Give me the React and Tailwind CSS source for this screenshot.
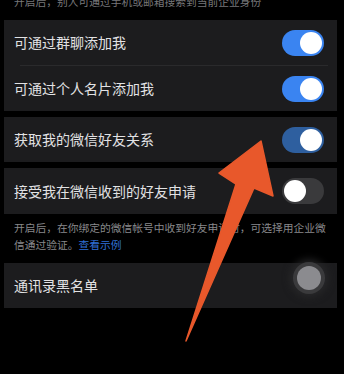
import React from "react";

const Toggle = ({ on, dim }) => {
    if (on) {
        return (
            <div
                className={`w-[42px] h-[26px] rounded-full flex items-center justify-end pr-[2px] ${
                    dim ? "bg-[#2e5f9f]" : "bg-[#3a84f1]"
                }`}
            >
                <div className="w-[22px] h-[22px] rounded-full bg-white" />
            </div>
        );
    }
    return (
        <div className="w-[42px] h-[26px] rounded-full flex items-center pl-[2px] bg-[#3a3a3c]">
            <div className="w-[22px] h-[22px] rounded-full bg-white" />
        </div>
    );
};

const Row = ({ label, children, className = "" }) => (
    <div className={`flex items-center justify-between pl-[10px] pr-[13px] h-[45px] ${className}`}>
        <span className="text-[14px] text-[#e2e2e4]">{label}</span>
        {children}
    </div>
);

export default function App() {
    return (
        <div
            className="relative w-[344px] h-[374px] overflow-hidden bg-black"
            style={{ fontFamily: '"Noto Sans CJK SC", "Noto Sans", sans-serif' }}
        >
            <div className="pl-[14px] -mt-[7px] h-[27px] text-[10.75px] leading-[17px] text-[#77777a]">
                开启后，别人可通过手机或邮箱搜索到当前企业身份
            </div>

            <div className="flex flex-col ml-[4px] w-[333px]">
                <div className="bg-[#1c1c1e]">
                    <Row label="可通过群聊添加我">
                        <Toggle on />
                    </Row>
                    <div className="ml-[16px] mr-[9px] h-px bg-[#2a2a2c]" />
                    <Row label="可通过个人名片添加我">
                        <Toggle on />
                    </Row>
                </div>

                <div className="bg-[#1c1c1e] mt-[6px]">
                    <Row label="获取我的微信好友关系">
                        <Toggle on dim />
                    </Row>
                </div>

                <div className="bg-[#1c1c1e] mt-[6px]">
                    <Row label="接受我在微信收到的好友申请" className="h-[46px]">
                        <Toggle />
                    </Row>
                </div>

                <div className="pl-[10px] pr-[6px] pt-[5px] h-[49px] text-[10.75px] leading-[17px] text-[#88888b]">
                    开启后，在你绑定的微信帐号中收到好友申请时，可选择用企业微信通过验证。
                    <span className="text-[#2f6fd6]">查看示例</span>
                </div>

                <div className="bg-[#1c1c1e]">
                    <Row label="通讯录黑名单">
                        <div className="w-[42px] h-[26px] flex items-center justify-end -mt-[16px]">
                            <div className="w-[24px] h-[24px] rounded-full bg-[#8b8b8f] shadow-[0_0_0_4px_#3a3a3c,0_0_8px_6px_#2a2a2c] mr-[3px]" />
                        </div>
                    </Row>
                </div>
            </div>

            <svg
                className="absolute left-0 top-0 pointer-events-none"
                width="344"
                height="374"
                viewBox="0 0 344 374"
            >
                <polygon
                    points="261,141 273,196 254,188 186,341 236,184 219,173"
                    fill="#e8582b"
                    stroke="#e8582b"
                    strokeWidth="1.5"
                    strokeLinejoin="round"
                />
            </svg>
        </div>
    );
}
